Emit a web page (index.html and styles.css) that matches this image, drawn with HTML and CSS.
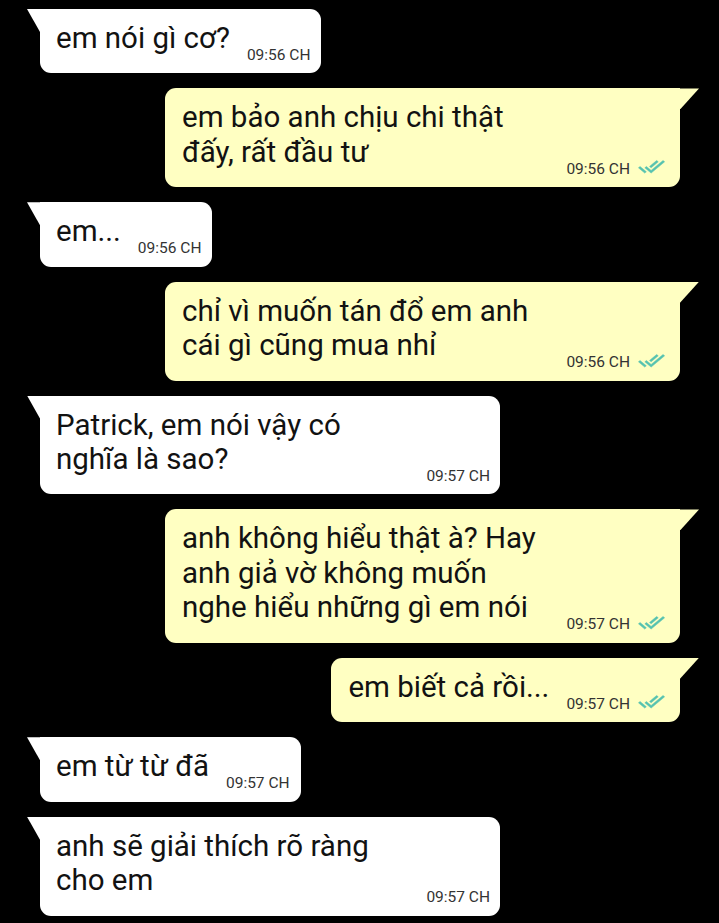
FILE: index.html
```html
<!DOCTYPE html>
<html lang="vi">
<head>
<meta charset="utf-8">
<title>Chat</title>
<link rel="stylesheet" href="styles.css">
</head>
<body>
<div class="chat">
  <div class="bubble in">
    <div class="text">em nói gì cơ?</div>
    <div class="meta"><span class="time">09:56 CH</span></div>
  </div>
  <div class="bubble out wide">
    <div class="text">em bảo anh chịu chi thật<br>đấy, rất đầu tư</div>
    <div class="meta"><span class="time">09:56 CH</span><svg class="tick" viewBox="0 4 24 16" width="27" height="15" preserveAspectRatio="none"><path d="M18 7l-1.41-1.41-6.34 6.34 1.41 1.41L18 7zm4.24-1.41L11.66 16.17 7.48 12l-1.41 1.41L11.66 19l12-12-1.42-1.41zM.41 13.41L6 19l1.41-1.41L1.83 12 .41 13.41z"/></svg></div>
  </div>
  <div class="bubble in">
    <div class="text">em...</div>
    <div class="meta"><span class="time">09:56 CH</span></div>
  </div>
  <div class="bubble out wide">
    <div class="text">chỉ vì muốn tán đổ em anh<br>cái gì cũng mua nhỉ</div>
    <div class="meta"><span class="time">09:56 CH</span><svg class="tick" viewBox="0 4 24 16" width="27" height="15" preserveAspectRatio="none"><path d="M18 7l-1.41-1.41-6.34 6.34 1.41 1.41L18 7zm4.24-1.41L11.66 16.17 7.48 12l-1.41 1.41L11.66 19l12-12-1.42-1.41zM.41 13.41L6 19l1.41-1.41L1.83 12 .41 13.41z"/></svg></div>
  </div>
  <div class="bubble in wide">
    <div class="text">Patrick, em nói vậy có<br>nghĩa là sao?</div>
    <div class="meta"><span class="time">09:57 CH</span></div>
  </div>
  <div class="bubble out wide">
    <div class="text">anh không hiểu thật à? Hay<br>anh giả vờ không muốn<br>nghe hiểu những gì em nói</div>
    <div class="meta"><span class="time">09:57 CH</span><svg class="tick" viewBox="0 4 24 16" width="27" height="15" preserveAspectRatio="none"><path d="M18 7l-1.41-1.41-6.34 6.34 1.41 1.41L18 7zm4.24-1.41L11.66 16.17 7.48 12l-1.41 1.41L11.66 19l12-12-1.42-1.41zM.41 13.41L6 19l1.41-1.41L1.83 12 .41 13.41z"/></svg></div>
  </div>
  <div class="bubble out">
    <div class="text">em biết cả rồi...</div>
    <div class="meta"><span class="time">09:57 CH</span><svg class="tick" viewBox="0 4 24 16" width="27" height="15" preserveAspectRatio="none"><path d="M18 7l-1.41-1.41-6.34 6.34 1.41 1.41L18 7zm4.24-1.41L11.66 16.17 7.48 12l-1.41 1.41L11.66 19l12-12-1.42-1.41zM.41 13.41L6 19l1.41-1.41L1.83 12 .41 13.41z"/></svg></div>
  </div>
  <div class="bubble in">
    <div class="text">em từ từ đã</div>
    <div class="meta"><span class="time">09:57 CH</span></div>
  </div>
  <div class="bubble in wide">
    <div class="text">anh sẽ giải thích rõ ràng<br>cho em</div>
    <div class="meta"><span class="time">09:57 CH</span></div>
  </div>
</div>
</body>
</html>
```
FILE: styles.css
```css
html, body {
  margin: 0;
  padding: 0;
  background: #000;
}
body {
  font-family: Roboto, "Noto Sans", sans-serif;
  width: 719px;
  height: 923px;
  overflow: hidden;
}
.chat {
  display: flex;
  flex-direction: column;
  gap: 15px;
  padding-top: 9px;
}
.bubble {
  position: relative;
  display: flex;
  align-items: flex-end;
  box-sizing: border-box;
  border-radius: 11px;
  padding: 12px 11px 9.4px 16px;
}
.bubble.in {
  align-self: flex-start;
  margin-left: 40px;
  background: #ffffff;
  border-top-left-radius: 0;
}
.bubble.in::before {
  content: "";
  position: absolute;
  left: -13px;
  top: 0;
  width: 13px;
  height: 23px;
  background: #ffffff;
  clip-path: polygon(0 0, 100% 0, 100% 100%);
}
.bubble.out {
  align-self: flex-end;
  margin-right: 39px;
  background: #ffffc2;
  border-top-right-radius: 0;
  padding-left: 17px;
  padding-right: 15px;
}
.bubble.out::after {
  content: "";
  position: absolute;
  right: -19px;
  top: 0;
  width: 19px;
  height: 21px;
  background: #ffffc2;
  clip-path: polygon(0 0, 100% 0, 0 100%);
}
.bubble.in.wide {
  width: 460px;
  padding-right: 10px;
}
.bubble.out.wide {
  width: 515px;
}
.text {
  font-size: 29.5px;
  line-height: 34.5px;
  color: #121212;
  padding-bottom: 8.5px;
  white-space: nowrap;
}
.meta {
  display: flex;
  align-items: center;
  gap: 8px;
  margin-left: 17px;
  flex-shrink: 0;
}
.wide .meta {
  margin-left: auto;
}
.time {
  font-size: 15.5px;
  line-height: 18px;
  color: #333333;
}
.tick {
  display: block;
  margin-top: -4px;
  fill: #55c2b0;
  stroke: #55c2b0;
  stroke-width: 0.5;
}
```
